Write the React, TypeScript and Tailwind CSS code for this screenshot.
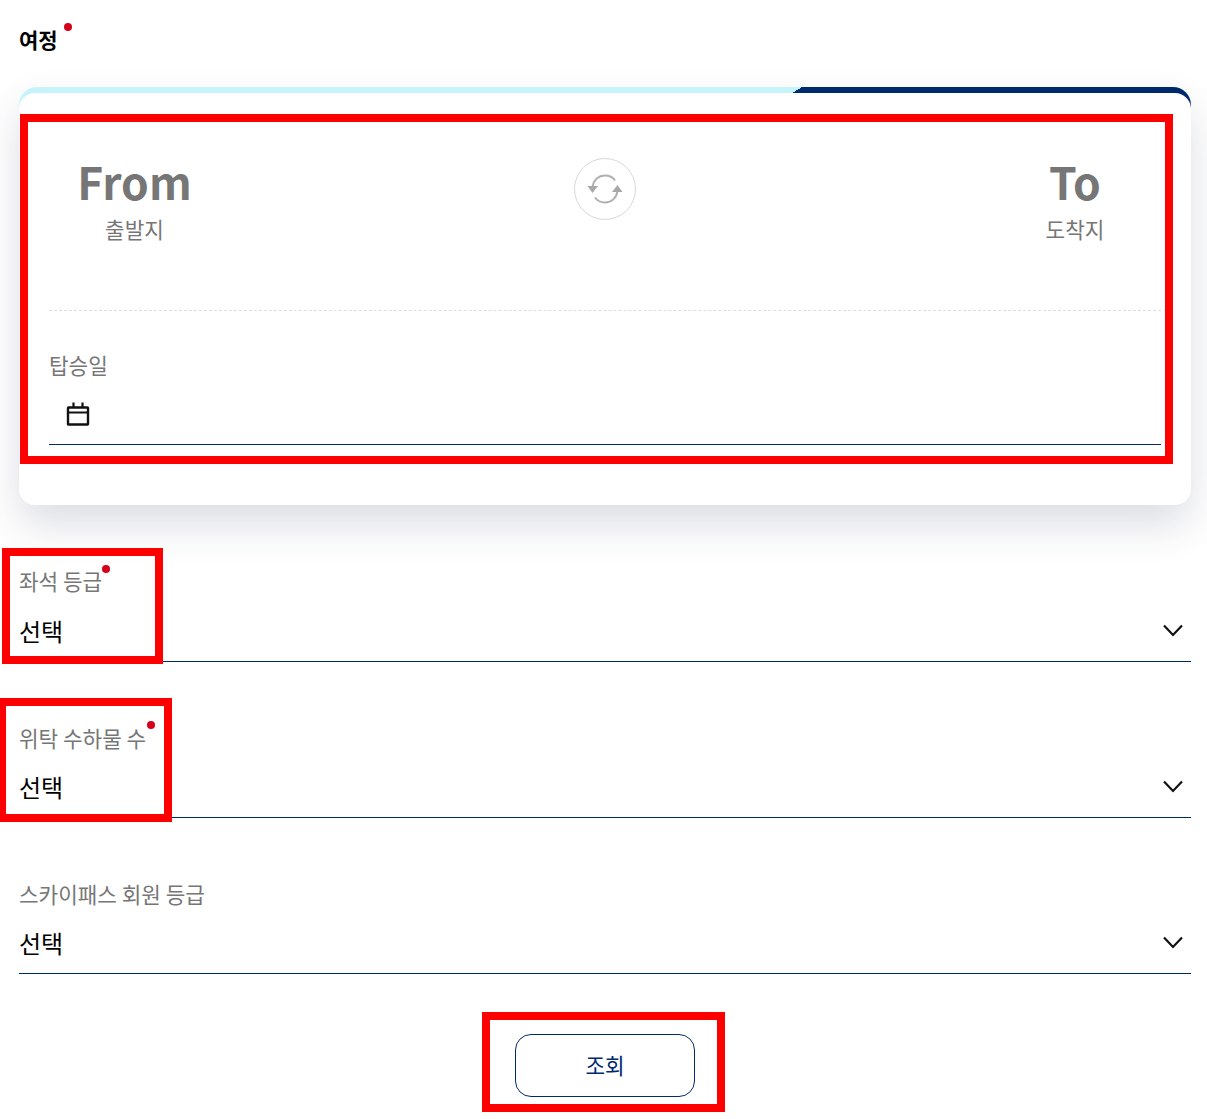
const font = "font-['Noto_Sans_CJK_KR','Noto_Sans',sans-serif]";

function Chevron() {
  return (
    <svg width="22" height="14" viewBox="0 0 22 14" fill="none" className="block shrink-0">
      <path d="M2 1.5 L11 11 L20 1.5" stroke="#111" strokeWidth="2.2" />
    </svg>
  );
}

function Calendar() {
  return (
    <svg width="24" height="24" viewBox="0 0 24 24" fill="none" className="block shrink-0">
      <rect x="2" y="5.5" width="20" height="17" rx="0.5" stroke="#111" strokeWidth="2.4" />
      <path d="M2 10.5 H22" stroke="#111" strokeWidth="2" />
      <path d="M7.5 0.5 V5 M16.5 0.5 V5" stroke="#111" strokeWidth="2.2" />
    </svg>
  );
}

function Swap() {
  return (
    <div className="mt-[5px] w-[62px] h-[62px] rounded-full border border-[#d8d8dc] bg-white flex items-center justify-center">
      <svg width="36" height="32" viewBox="0 0 36 32" fill="none">
        <path d="M5.5 14 C6.5 7 11.5 2.5 18 2.5 C22.5 2.5 26 4.5 28 7.5" stroke="#b0b0b0" strokeWidth="2" />
        <path d="M30.5 18 C29.5 25 24.5 29.5 18 29.5 C13.5 29.5 10 27.5 8 24.5" stroke="#b0b0b0" strokeWidth="2" />
        <path d="M0.5 13 H11 L5.5 20 Z" fill="#a8a8a8" />
        <path d="M25 19 H35.5 L30.5 12 Z" fill="#a8a8a8" />
      </svg>
    </div>
  );
}

function Dot({ className }: { className: string }) {
  return <span className={`absolute w-2 h-2 rounded-full bg-[#d5001c] ${className}`} />;
}

function SelectRow({ label, dot, mt, labelBox }: { label: string; dot?: string; mt: string; labelBox: string }) {
  return (
    <div className={`${mt} border-b border-[#002a6e] h-[116px] flex flex-col`}>
      <div className={`h-[30px] flex items-center ${labelBox}`}>
        <span className="relative text-[21.3px] leading-[30px] text-[#767676]">
          {label}
          {dot && <Dot className={dot} />}
        </span>
      </div>
      <div className="h-[36px] flex items-center justify-between pr-[7px]">
        <span className="text-[24px] leading-[36px] text-black">선택</span>
        <Chevron />
      </div>
    </div>
  );
}

function Highlight({ className }: { className: string }) {
  return <div className={`absolute border-[8px] border-[#ff0000] pointer-events-none ${className}`} />;
}

export default function App() {
  return (
    <div className={`relative w-[1207px] h-[1119px] bg-white overflow-hidden pl-[19px] pr-[16px] ${font}`}>
      <div className="h-[87px] pt-[22px]">
        <span className="relative inline-block text-[21px] leading-[34px] font-bold text-black">
          여정
          <Dot className="left-[45px] top-[1px]" />
        </span>
      </div>

      <div className="w-[1172px] rounded-[20px] shadow-[0_20px_40px_rgba(40,50,80,0.16)]">
        <div className="h-[30px] rounded-t-[18px] bg-[linear-gradient(149deg,#c7f3fd_64.1%,#002a6e_64.1%)]" />
        <div className="relative -mt-[24px] bg-white rounded-[16px] h-[412px] px-[30px] pt-[60px]">
          <div className="flex justify-between items-start pl-[29px] pr-[30px] h-[158px] border-b border-dashed border-[#dddddd]">
            <div className="w-[113px] flex flex-col items-center">
              <span className="text-[44.4px] leading-[56px] font-bold text-[#767676]">From</span>
              <span className="mt-[5px] text-[21.3px] leading-[30px] text-[#767676]">출발지</span>
            </div>
            <Swap />
            <div className="w-[112px] flex flex-col items-center">
              <span className="text-[44.4px] leading-[56px] font-bold text-[#767676]">To</span>
              <span className="mt-[5px] text-[21.3px] leading-[30px] text-[#767676]">도착지</span>
            </div>
          </div>
          <div className="mt-[39px] text-[21.3px] leading-[30px] text-[#767676]">탑승일</div>
          <div className="h-[65px] border-b border-[#002a6e] pl-[17px] pt-[22px]">
            <Calendar />
          </div>
        </div>
      </div>

      <SelectRow label="좌석 등급" dot="left-[83px] top-[-1px]" mt="mt-[41px]" labelBox="mt-[20px] mb-[17px]" />
      <SelectRow label="위탁 수하물 수" dot="left-[127.5px] top-[-2px]" mt="mt-[40px]" labelBox="mt-[21px] mb-[16px]" />
      <SelectRow label="스카이패스 회원 등급" mt="mt-[40px]" labelBox="mt-[21px] mb-[16px]" />

      <div className="flex justify-center mt-[60px]">
        <button className="w-[180px] h-[63px] rounded-[16px] border border-[#002a6e] bg-white pb-[2px] text-[21.3px] text-[#002a6e]">
          조회
        </button>
      </div>

      <Highlight className="left-[20px] top-[114px] w-[1153px] h-[350px]" />
      <Highlight className="left-[2px] top-[548px] w-[161px] h-[116px]" />
      <Highlight className="left-[-2px] top-[698px] w-[174px] h-[124px]" />
      <Highlight className="left-[482px] top-[1012px] w-[243px] h-[100px]" />
    </div>
  );
}
